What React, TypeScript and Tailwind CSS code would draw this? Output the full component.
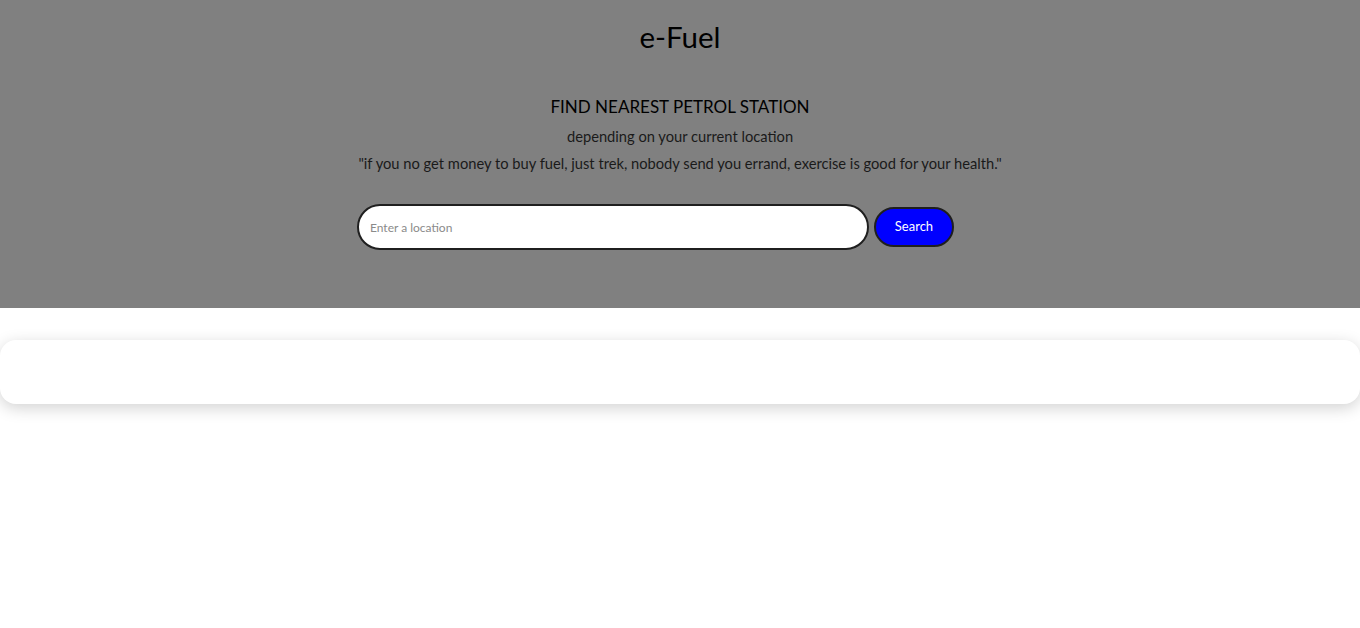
export default function App() {
  return (
    <div className="min-h-screen bg-white" style={{ fontFamily: 'Lato, "Open Sans", sans-serif' }}>
      {/* Hero */}
      <header className="bg-[#808080] h-[308px] flex flex-col items-center pt-[17px]">
        <h1 className="text-[29.5px] leading-[40px] text-black">e-Fuel</h1>
        <h2 className="mt-[38px] text-[17px] leading-[24px] text-black">FIND NEAREST PETROL STATION</h2>
        <p className="mt-[6px] text-[14.7px] leading-[22px] text-[#1a1a1a]">depending on your current location</p>
        <p className="mt-[5px] text-[14.7px] leading-[22px] text-[#1a1a1a]">
          "if you no get money to buy fuel, just trek, nobody send you errand, exercise is good for your health."
        </p>
        <form className="mt-[30px] pr-[49px] flex items-center gap-[5px]" onSubmit={e => e.preventDefault()}>
          <input
            type="text"
            placeholder="Enter a location"
            className="w-[512px] h-[46px] rounded-full bg-white border-2 border-[#1f1f1f] px-[11px] text-[12px] text-black placeholder:text-[#8a8a8a] outline-none"
          />
          <button
            type="submit"
            className="w-[80px] h-[40px] rounded-full bg-[#0000ff] border-2 border-[#1f1f1f] text-white text-[13px]"
          >
            Search
          </button>
        </form>
      </header>

      {/* Results card */}
      <div className="mt-[32px] h-[64px] rounded-[16px] bg-white shadow-[0_4px_16px_rgba(0,0,0,0.18)]" />
    </div>
  );
}
